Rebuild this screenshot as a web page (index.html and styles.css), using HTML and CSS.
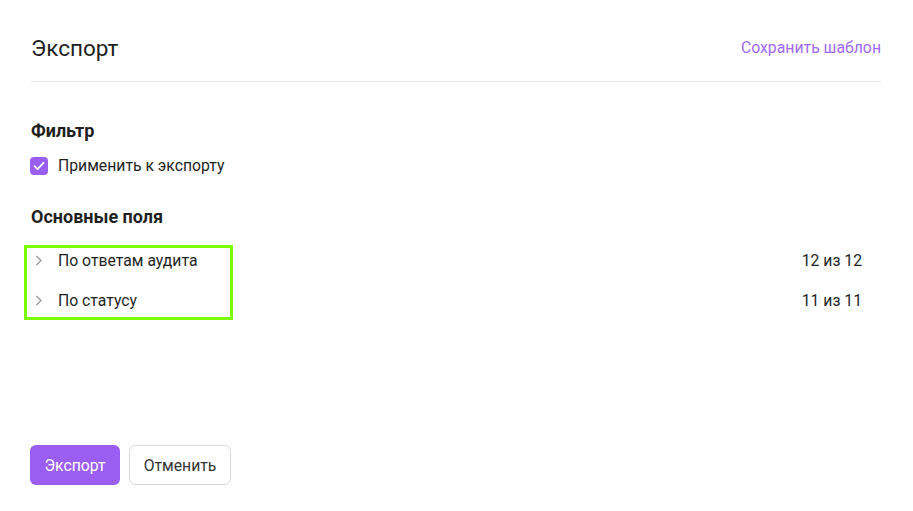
FILE: index.html
```html
<!DOCTYPE html>
<html lang="ru">
<head>
<meta charset="utf-8">
<title>Экспорт</title>
<link rel="stylesheet" href="styles.css">
</head>
<body>
<div class="page">
  <header class="header">
    <h1 class="title">Экспорт</h1>
    <a class="link" href="#">Сохранить шаблон</a>
  </header>

  <section class="section filter">
    <h2 class="heading">Фильтр</h2>
    <label class="check">
      <span class="box">
        <svg width="12" height="10" viewBox="0 0 12 10"><path d="M1.5 5.2 L4.6 8.2 L10.5 1.8" fill="none" stroke="#fff" stroke-width="1.7" stroke-linecap="round" stroke-linejoin="round"/></svg>
      </span>
      <span>Применить к экспорту</span>
    </label>
  </section>

  <section class="section fields">
    <h2 class="heading">Основные поля</h2>
    <div class="list">
      <div class="row">
        <span class="chev"><svg width="8" height="11" viewBox="0 0 8 11"><path d="M1.5 1 L6 5.5 L1.5 10" fill="none" stroke="#9a9a9a" stroke-width="1.3"/></svg></span>
        <span class="name">По ответам аудита</span>
        <span class="count">12 из 12</span>
      </div>
      <div class="row">
        <span class="chev"><svg width="8" height="11" viewBox="0 0 8 11"><path d="M1.5 1 L6 5.5 L1.5 10" fill="none" stroke="#9a9a9a" stroke-width="1.3"/></svg></span>
        <span class="name">По статусу</span>
        <span class="count">11 из 11</span>
      </div>
      <div class="highlight"></div>
    </div>
  </section>

  <footer class="footer">
    <button class="btn primary">Экспорт</button>
    <button class="btn secondary">Отменить</button>
  </footer>
</div>
</body>
</html>
```
FILE: styles.css
```css
* { box-sizing: border-box; }
html, body { margin: 0; padding: 0; background: #fff; }
body {
  font-family: Roboto, "Noto Sans", "Liberation Sans", sans-serif;
  color: #1f1f1f;
  width: 913px;
  height: 511px;
  overflow: hidden;
}
.page {
  height: 511px;
  padding: 0 32px 26px 31px;
  display: flex;
  flex-direction: column;
}
.header {
  display: flex;
  align-items: center;
  justify-content: space-between;
  padding: 31px 0 16px;
  border-bottom: 1px solid #e6e6e6;
}
.title {
  margin: 0;
  font-size: 22.5px;
  font-weight: 400;
  line-height: 34px;
  color: #1f1f1f;
}
.link {
  font-size: 15.8px;
  color: #a06af2;
  text-decoration: none;
  line-height: 20px;
}
.section { display: flex; flex-direction: column; }
.filter { margin-top: 39px; }
.heading {
  margin: 0;
  font-size: 18px;
  font-weight: 700;
  line-height: 20px;
  color: #1f1f1f;
}
.check {
  margin-top: 13px;
  display: flex;
  align-items: center;
  gap: 10px;
  font-size: 15.75px;
  line-height: 24px;
  margin-left: -1px;
}
.box {
  width: 18px;
  height: 18px;
  border-radius: 4px;
  background: #9b5ef3;
  display: flex;
  align-items: center;
  justify-content: center;
}
.fields { margin-top: 29px; }
.list {
  position: relative;
  margin-top: 13px;
}
.row {
  height: 40px;
  display: flex;
  align-items: center;
  font-size: 15.75px;
  padding-right: 19px;
}
.chev {
  width: 27px;
  padding-left: 4px;
  display: flex;
  align-items: center;
}
.name { flex: 1; }
.count { color: #1f1f1f; }
.highlight {
  position: absolute;
  left: -7px;
  top: 5px;
  width: 209px;
  height: 75px;
  border: 3px solid #7cfc00;
  pointer-events: none;
}
.footer {
  margin-top: auto;
  display: flex;
  gap: 9px;
  margin-left: -1px;
}
.btn {
  height: 40px;
  border-radius: 6px;
  font-family: inherit;
  font-size: 15.75px;
  padding: 0;
  cursor: pointer;
}
.primary {
  width: 90px;
  background: #9b5ef3;
  border: none;
  color: #fff;
}
.secondary {
  width: 102px;
  background: #fff;
  border: 1px solid #d9d9d9;
  color: #333;
}
```
